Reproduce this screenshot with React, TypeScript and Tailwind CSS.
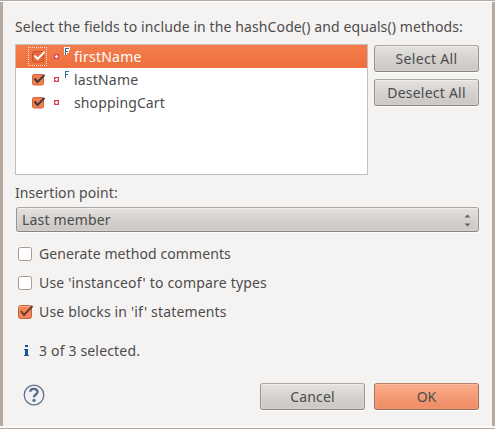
import type { ReactNode } from "react";

const FIELDS = [
  { name: "firstName", final: true, selected: true, tracking: "tracking-[0.24px]" },
  { name: "lastName", final: true, selected: false, tracking: "tracking-[0.2px]" },
  { name: "shoppingCart", final: false, selected: false, tracking: "tracking-[0.12px]" },
];

function Button({ children, primary = false }: { children: ReactNode; primary?: boolean }) {
  const look = primary
    ? "border-[#a5705a] border-t-[#b98069] border-b-[#95705f] bg-linear-to-b from-[#fbac8c] via-[#f49b75] to-[#ee8b62] shadow-[inset_0_1px_0_#ffbea0,inset_0_0_3px_#ffb08c,0_1px_0_#fff]"
    : "border-[#999590] border-t-[#aaa6a1] border-b-[#888480] bg-linear-to-b from-[#e5e3e1] via-[#d5d2cf] to-[#cbc7c4] shadow-[inset_0_1px_0_#f0efed,inset_0_0_3px_#e2e0de,0_1px_0_#fff]";
  return (
    <button className={`flex h-[27px] w-[105px] shrink-0 items-center justify-center rounded-[3px] border ${look}`}>
      {children}
    </button>
  );
}

function SmallCheck({ selected }: { selected: boolean }) {
  return (
    <span className={`flex h-[19px] w-[19px] shrink-0 items-center justify-center ${selected ? "border border-dotted border-[#ffe1d3]" : ""}`}>
      <svg width="15" height="13" viewBox="0 0 15 13" className="ml-px shrink-0">
        <rect x="1.5" y="1.5" width="11" height="10.5" rx="1.5" fill={selected ? "#e86736" : "#f17e50"} stroke={selected ? "#c8562d" : "#d8663a"} />
        <path d="M3.5 5.5 6.5 9 13.5 2" fill="none" stroke={selected ? "#fff" : "#3f3b37"} strokeWidth="2" />
      </svg>
    </span>
  );
}

function Option({ label, checked = false, tracking }: { label: string; checked?: boolean; tracking: string }) {
  return (
    <label className="flex h-[29px] items-center">
      {checked ? (
        <svg width="17" height="16" viewBox="0 0 17 16" className="-ml-px mr-[5px]">
          <rect x="1.5" y="1.5" width="13" height="13" rx="2" fill="#f58459" stroke="#bd6543" />
          <path d="M2.5 4V2.5H13.5" fill="none" stroke="#ffad8b" />
          <path d="M4 7 7 11 15.5 2" fill="none" stroke="#683d2d" strokeWidth="2" />
        </svg>
      ) : (
        <span className="mr-[7px] h-[14px] w-[14px] rounded-[2.5px] border border-[#a79b91] bg-white" />
      )}
      <span className={tracking}>{label}</span>
    </label>
  );
}

export default function App() {
  return (
    <div className="flex h-[429px] w-[495px] flex-col overflow-hidden border-y border-[#b5a9a0] bg-[#f5f3f2] font-['Noto_Sans','Open_Sans',sans-serif] text-[14px] leading-[20px] whitespace-nowrap text-[#4c4c4c]">
      <div className="h-px shrink-0 bg-white" />
      <main className="flex h-[424px] shrink-0 flex-col border-x-[3px] border-[#b5a9a0] pr-[13px] pl-3">
        <h1 className="mt-[15px] h-5 tracking-[0.11px]">Select the fields to include in the hashCode() and equals() methods:</h1>
        <section className="mt-[7px] flex h-[131px] gap-[6px]">
          <div className="w-[353px] border border-[#c6beb7] bg-white">
            {FIELDS.map((f) => (
              <div
                key={f.name}
                className={`flex h-[23px] items-center pl-3 ${f.selected ? "bg-linear-to-b from-[#f47c4c] to-[#ed703e] text-white" : ""}`}
              >
                <SmallCheck selected={f.selected} />
                <svg width="18" height="21" viewBox="0 0 18 21" shapeRendering="crispEdges" className="ml-[6px]">
                  <path d="M1 8h5v5h-5z" fill="#d93f55" />
                  <path d="M2 9h3v3h-3z" fill="#e68490" />
                  <path d="M2 10h3v1h-3zM3 9h1v3h-1z" fill="#fff" />
                  {f.final && f.selected && <path d="M11 1h6v3h-1v3h-2v2h-3z" fill="#fff" />}
                  {f.final && <path d="M12 2h4v1h-3v2h2v1h-2v3h-1z" fill="#356c94" />}
                </svg>
                <span className={`ml-[3px] ${f.tracking}`}>{f.name}</span>
              </div>
            ))}
          </div>
          <div className="mt-px flex flex-col gap-[7px]">
            <Button><span className="tracking-[0.32px]">Select All</span></Button>
            <Button><span className="tracking-[0.22px]">Deselect All</span></Button>
          </div>
        </section>
        <div className="mt-2 h-5 tracking-[0.09px]">Insertion point:</div>
        <div className="mt-1 ml-px flex h-[25px] shrink-0 items-center justify-between rounded-[3px] border border-[#999590] border-t-[#aaa6a1] border-b-[#888480] bg-linear-to-b from-[#e5e3e1] via-[#d5d2cf] to-[#cbc7c4] pr-2 pl-[5px] shadow-[inset_0_1px_0_#f0efed,inset_0_0_3px_#e2e0de,0_1px_0_#fff]">
          <span className="tracking-[0.16px]">Last member</span>
          <svg width="7" height="13" viewBox="0 0 7 13" fill="#686561" className="-mr-px mt-[2px]">
            <path d="M0.5 3.5 3.5 0.5 6.5 3.5zM0.5 9.5 3.5 12.5 6.5 9.5z" />
          </svg>
        </div>
        <div className="mt-[7px] flex flex-col pl-[3px]">
          <Option label="Generate method comments" tracking="tracking-[0.09px]" />
          <Option label="Use 'instanceof' to compare types" tracking="tracking-[0.18px]" />
          <Option label="Use blocks in 'if' statements" checked tracking="tracking-[0.17px]" />
        </div>
        <div className="mt-[15px] flex h-5 items-center pl-[9px]">
          <svg width="5" height="11" viewBox="0 0 5 11" fill="#15549a" className="-mt-[2px]">
            <path d="M1 0h3v2H1zM0 4h4v6h1v1H0v-1h1V5H0z" />
          </svg>
          <span className="ml-[10px] tracking-[0.17px]">3 of 3 selected.</span>
        </div>
        <footer className="mt-[22px] flex h-[27px] items-center">
          <svg width="22" height="22" viewBox="0 0 22 22" className="mt-[-3px] ml-2">
            <circle cx="11" cy="11" r="9.8" fill="#f1f2f3" stroke="#607089" strokeWidth="1.3" />
            <path d="M7.3 7.7C7.5 3.8 14.7 4 14.5 8c-.1 2.4-3.5 2.7-3.5 5.2" fill="none" stroke="#576b8b" strokeWidth="2.4" />
            <circle cx="11" cy="16.3" r="1.6" fill="#576b8b" />
          </svg>
          <div className="ml-auto flex gap-[9px]">
            <Button><span className="tracking-[0.15px]">Cancel</span></Button>
            <Button primary><span>OK</span></Button>
          </div>
        </footer>
      </main>
      <div className="h-[2px] shrink-0 bg-[#faf9f8]" />
    </div>
  );
}
